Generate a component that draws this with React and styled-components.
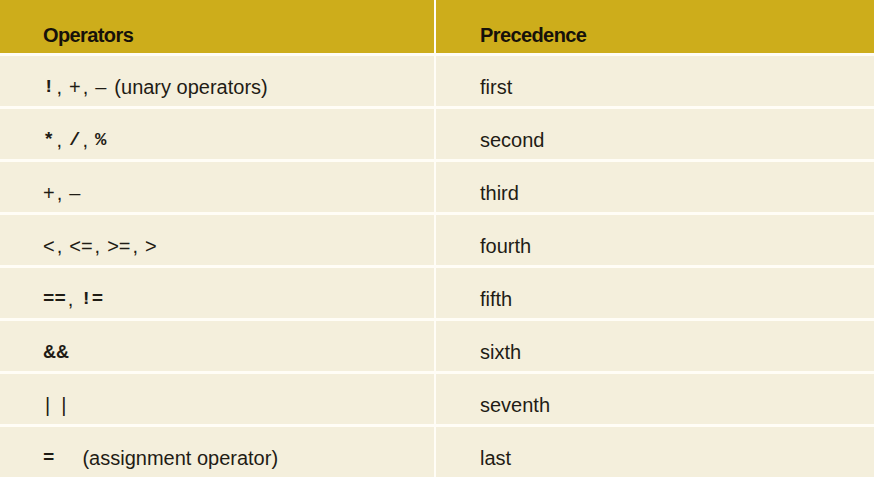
import styled, { createGlobalStyle } from 'styled-components';

const GlobalStyle = createGlobalStyle`
  html, body {
    margin: 0;
    padding: 0;
    background: #ffffff;
  }
`;

const Table = styled.div`
  width: 874px;
  height: 477px;
  display: grid;
  grid-template-columns: 434px 1fr;
  grid-template-rows: 53px repeat(8, 50px);
  column-gap: 2px;
  row-gap: 3px;
  background: #fffdf6;
  font-family: "Liberation Sans", Arial, sans-serif;
  color: #1f1c15;
`;

const HeadCell = styled.div`
  background: #cdad1b;
  padding: 25px 0 0 ${(p) => (p.$right ? '44px' : '43px')};
  font-weight: 700;
  font-size: 20px;
  line-height: 20px;
  letter-spacing: -0.6px;
  color: #16110a;
`;

const Row = styled.div`
  display: contents;
`;

const Cell = styled.div`
  background: #f4efdc;
  padding: 21px 0 0 ${(p) => (p.$right ? '44px' : '43px')};
  font-size: 20px;
  line-height: 20px;
  white-space: pre;
  display: flex;
  align-items: flex-start;
`;

const Mono = styled.span`
  font-family: "Liberation Mono", "DejaVu Sans Mono", monospace;
  font-weight: 700;
  font-size: 19px;
`;

const Sym = styled.span`
  font-weight: ${(p) => (p.$bold ? 700 : 400)};
  font-size: ${(p) => (p.$bold ? '18px' : '20px')};
`;

const Sep = styled.span`
  margin: 0 7px 0 2px;
`;

const Bars = styled.span`
  letter-spacing: 11px;
  margin-left: 2px;
`;

const Note = styled.span`
  margin-left: ${(p) => p.$gap}px;
`;

const Comma = () => <Sep>,</Sep>;

const rows = [
  {
    level: 'first',
    ops: (
      <>
        <Mono>!</Mono><Comma /><Sym>+</Sym><Comma /><Sym>–</Sym>
        <Note $gap={8}>(unary operators)</Note>
      </>
    ),
  },
  {
    level: 'second',
    ops: (
      <>
        <Mono>*</Mono><Comma /><Mono>/</Mono><Comma /><Mono>%</Mono>
      </>
    ),
  },
  {
    level: 'third',
    ops: (
      <>
        <Sym>+</Sym><Comma /><Sym>–</Sym>
      </>
    ),
  },
  {
    level: 'fourth',
    ops: (
      <>
        <Sym>{'<'}</Sym><Comma /><Sym>{'<='}</Sym><Comma /><Sym>{'>='}</Sym><Comma /><Sym>{'>'}</Sym>
      </>
    ),
  },
  {
    level: 'fifth',
    ops: (
      <>
        <Mono>==</Mono><Comma /><Mono>!=</Mono>
      </>
    ),
  },
  { level: 'sixth', ops: <Sym $bold>&amp;&amp;</Sym> },
  { level: 'seventh', ops: <Bars>||</Bars> },
  {
    level: 'last',
    ops: (
      <>
        <Mono>=</Mono>
        <Note $gap={28}>(assignment operator)</Note>
      </>
    ),
  },
];

const App = () => (
  <>
    <GlobalStyle />
    <Table>
      <HeadCell>Operators</HeadCell>
      <HeadCell $right>Precedence</HeadCell>
      {rows.map((row) => (
        <Row key={row.level}>
          <Cell>{row.ops}</Cell>
          <Cell $right>{row.level}</Cell>
        </Row>
      ))}
    </Table>
  </>
);

export default App;
